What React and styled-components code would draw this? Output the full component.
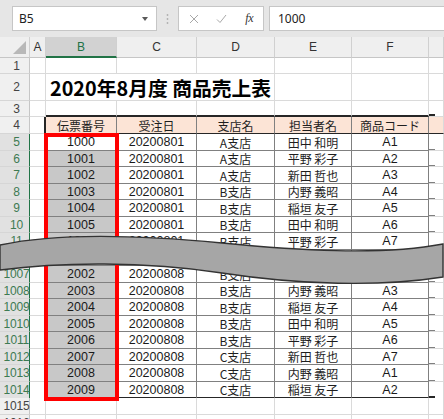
import React from 'react';
import styled, { createGlobalStyle } from 'styled-components';

const Global = createGlobalStyle`
  html, body { margin: 0; padding: 0; background: #fff; }
  body { width: 444px; height: 419px; overflow: hidden; }
  #root { width: 444px; height: 419px; }
`;

const COLS = '30px 16px 71px 80px 78px 77px 77px 1fr';
const DARK = '#262626';
const INNER = '#808080';
const GRID = '#dadada';
const GREEN = '#217346';

const Page = styled.div`
  position: relative;
  width: 444px;
  height: 419px;
  overflow: hidden;
  background: #fff;
  font-family: "Noto Sans CJK JP", "Noto Sans", sans-serif;
`;

const FormulaBar = styled.div`
  height: 37px;
  box-sizing: border-box;
  background: #e6e6e6;
  display: flex;
  align-items: center;
  padding-left: 12px;
`;

const NameBox = styled.div`
  width: 145px;
  height: 25px;
  box-sizing: border-box;
  background: #fff;
  border: 1px solid #c6c6c6;
  display: flex;
  align-items: center;
  justify-content: space-between;
  padding: 0 8px 0 6px;
  font: 12px "Noto Sans", sans-serif;
  color: #222;
`;

const Caret = styled.span`
  width: 0;
  height: 0;
  border-left: 3.5px solid transparent;
  border-right: 3.5px solid transparent;
  border-top: 4px solid #5a5a5a;
`;

const Sep = styled.div`
  width: 21px;
  display: flex;
  justify-content: center;
`;

const FuncBox = styled.div`
  width: 86px;
  height: 25px;
  box-sizing: border-box;
  background: #fff;
  border: 1px solid #c6c6c6;
  display: flex;
  align-items: center;
  padding-left: 1px;
`;

const IconSlot = styled.div`
  width: 28px;
  display: flex;
  justify-content: center;
  align-items: center;
`;

const Fx = styled.span`
  font: italic 12px "Liberation Serif", serif;
  color: #333;
  letter-spacing: -0.5px;
`;

const FormulaInput = styled.div`
  flex: 1;
  margin-left: 5px;
  margin-right: -4px;
  height: 25px;
  box-sizing: border-box;
  background: #fff;
  border: 1px solid #c6c6c6;
  display: flex;
  align-items: center;
  padding-left: 8px;
  font: 12px "Noto Sans", sans-serif;
  color: #222;
`;

const Row = styled.div`
  display: grid;
  grid-template-columns: ${COLS};
  height: ${p => p.$h}px;
`;

const ColHead = styled.div`
  box-sizing: border-box;
  background: ${p => (p.$sel ? '#d2d2d2' : '#efefef')};
  border-right: 1px solid #d0d0d0;
  border-bottom: ${p => (p.$sel ? `2px solid ${GREEN}` : '1px solid #c6c6c6')};
  color: ${p => (p.$sel ? GREEN : '#333')};
  font: 12px "Liberation Sans", sans-serif;
  display: flex;
  align-items: center;
  justify-content: center;
  position: relative;
`;

const Corner = styled(ColHead)`
  &::after {
    content: '';
    position: absolute;
    right: 3px;
    bottom: 3px;
    width: 0;
    height: 0;
    border-left: 13px solid transparent;
    border-bottom: 13px solid #b8b8b8;
  }
`;

const RowHead = styled.div`
  box-sizing: border-box;
  background: ${p => (p.$sel ? '#e1e1e1' : '#f0f0f0')};
  border-right: 1px solid ${p => (p.$sel ? GREEN : '#c6c6c6')};
  border-bottom: 1px solid #d6d6d6;
  color: ${p => (p.$sel ? '#3d7a52' : '#444')};
  font: 12px/14px "Liberation Sans", sans-serif;
  display: flex;
  align-items: center;
  justify-content: center;
  padding-left: 4px;
  letter-spacing: -0.2px;
`;

const Cell = styled.div`
  box-sizing: border-box;
  background: ${p => p.$bg || '#fff'};
  border-right: ${p => p.$rw || 1}px solid ${p => p.$rc || GRID};
  border-bottom: ${p => p.$bw || 1}px solid ${p => p.$bc || GRID};
  color: #1e1e1e;
  font-size: 12px;
  line-height: 15px;
  display: flex;
  align-items: center;
  justify-content: center;
  white-space: nowrap;
`;

const NumCell = styled(Cell)`
  font-family: "Liberation Sans", sans-serif;
  font-size: 12.5px;
  line-height: 14px;
  color: #1a1a1a;
`;

const TitleCell = styled.div`
  grid-column: 3 / span 3;
  box-sizing: border-box;
  border-right: 1px solid ${GRID};
  border-bottom: 1px solid ${GRID};
  display: flex;
  align-items: center;
  padding-left: 4px;
  padding-top: 2px;
  font-size: 19.8px;
  line-height: 24px;
  font-weight: 700;
  color: #000;
  white-space: nowrap;
`;

const TailCell = styled(Cell)`
  background: ${p => (p.$tail ? `linear-gradient(${p.$tail}, ${p.$tail}) left bottom / 6px ${p.$tw || 1}px no-repeat, #fff` : '#fff')};
`;

const RedFrame = styled.div`
  position: absolute;
  left: 44px;
  top: 133px;
  width: 75px;
  height: 268px;
  box-sizing: border-box;
  border: 4px solid #ff0000;
  pointer-events: none;
`;

const Break = styled.svg`
  position: absolute;
  left: 0;
  top: 0;
  pointer-events: none;
`;

const heads = ['伝票番号', '受注日', '支店名', '担当者名', '商品コード'];

const data = [
  ['5', '1000', '20200801', 'A支店', '田中 和明', 'A1'],
  ['6', '1001', '20200801', 'A支店', '平野 彩子', 'A2'],
  ['7', '1002', '20200801', 'A支店', '新田 哲也', 'A3'],
  ['8', '1003', '20200801', 'B支店', '内野 義昭', 'A4'],
  ['9', '1004', '20200801', 'B支店', '稲垣 友子', 'A5'],
  ['10', '1005', '20200801', 'B支店', '田中 和明', 'A6'],
  ['11', '1006', '20200801', 'B支店', '平野 彩子', 'A7'],
  ['1006', '2001', '20200808', 'B支店', '平野 彩子', 'A1'],
  ['1007', '2002', '20200808', 'B支店', '新田 哲也', 'A2'],
  ['1008', '2003', '20200808', 'B支店', '内野 義昭', 'A3'],
  ['1009', '2004', '20200808', 'B支店', '稲垣 友子', 'A4'],
  ['1010', '2005', '20200808', 'B支店', '田中 和明', 'A5'],
  ['1011', '2006', '20200808', 'B支店', '平野 彩子', 'A6'],
  ['1012', '2007', '20200808', 'C支店', '新田 哲也', 'A7'],
  ['1013', '2008', '20200808', 'C支店', '内野 義昭', 'A1'],
  ['1014', '2009', '20200808', 'C支店', '稲垣 友子', 'A2'],
];

function PlainRow({ label, h }) {
  return (
    <Row $h={h}>
      <RowHead>{label}</RowHead>
      <Cell />
      <Cell />
      <Cell />
      <Cell />
      <Cell />
      <Cell />
      <Cell />
    </Row>
  );
}

export default function App() {
  return (
    <Page>
      <Global />
      <FormulaBar>
        <NameBox>
          <span>B5</span>
          <Caret />
        </NameBox>
        <Sep>
          <svg width="3" height="12" viewBox="0 0 3 12">
            <circle cx="1.5" cy="2" r="0.9" fill="#b0b0b0" />
            <circle cx="1.5" cy="6" r="0.9" fill="#b0b0b0" />
            <circle cx="1.5" cy="10" r="0.9" fill="#b0b0b0" />
          </svg>
        </Sep>
        <FuncBox>
          <IconSlot>
            <svg width="10" height="10" viewBox="0 0 10 10">
              <path d="M1 1 L9 9 M9 1 L1 9" stroke="#a8a8a8" strokeWidth="1" fill="none" />
            </svg>
          </IconSlot>
          <IconSlot>
            <svg width="11" height="10" viewBox="0 0 11 10">
              <path d="M1 5.5 L4 8.5 L10 1" stroke="#a8a8a8" strokeWidth="1" fill="none" />
            </svg>
          </IconSlot>
          <IconSlot>
            <Fx>fx</Fx>
          </IconSlot>
        </FuncBox>
        <FormulaInput>1000</FormulaInput>
      </FormulaBar>

      <Row $h={21}>
        <Corner />
        <ColHead>A</ColHead>
        <ColHead $sel>B</ColHead>
        <ColHead>C</ColHead>
        <ColHead>D</ColHead>
        <ColHead>E</ColHead>
        <ColHead>F</ColHead>
        <ColHead />
      </Row>

      <PlainRow label="1" h={16} />

      <Row $h={27}>
        <RowHead>2</RowHead>
        <Cell />
        <TitleCell>2020年8月度 商品売上表</TitleCell>
        <Cell />
        <Cell />
        <Cell />
      </Row>

      <Row $h={16}>
        <RowHead>3</RowHead>
        <Cell />
        <Cell $bw={2} $bc={DARK} />
        <Cell $bw={2} $bc={DARK} />
        <Cell $bw={2} $bc={DARK} />
        <Cell $bw={2} $bc={DARK} />
        <Cell $bw={2} $bc={DARK} />
        <TailCell $tail={DARK} $tw={2} />
      </Row>

      <Row $h={17}>
        <RowHead>4</RowHead>
        <Cell $rw={2} $rc={DARK} />
        {heads.map(t => (
          <Cell key={t} $bg="#fce4d6" $rc={INNER} $bc={DARK}>
            {t}
          </Cell>
        ))}
        <Cell $bg="#fce4d6" $bc={DARK} />
      </Row>

      {data.map(([n, id, d, b, p, c], i) => {
        const last = i === data.length - 1;
        const bw = last ? 2 : 1;
        const bc = last ? DARK : INNER;
        return (
          <Row key={n + id} $h={i % 2 === 0 ? 17 : 16}>
            <RowHead $sel>{n}</RowHead>
            <Cell $rw={2} $rc={DARK} />
            <NumCell $bg={i === 0 ? '#fff' : '#c8c8c8'} $rc={INNER} $bw={bw} $bc={bc}>{id}</NumCell>
            <NumCell $rc={INNER} $bw={bw} $bc={bc}>{d}</NumCell>
            <Cell $rc={INNER} $bw={bw} $bc={bc}>{b}</Cell>
            <Cell $rc={INNER} $bw={bw} $bc={bc}>{p}</Cell>
            <NumCell $rc={INNER} $bw={bw} $bc={bc}>{c}</NumCell>
            <TailCell $tail={bc} $tw={bw} />
          </Row>
        );
      })}

      <PlainRow label="1015" h={17} />
      <PlainRow label="1016" h={16} />

      <RedFrame />

      <Break width="444" height="419" viewBox="0 0 444 419">
        <path
          d="M0 245 C 60 232, 150 236, 222 243 S 380 256, 443 244 L 443 277 C 380 287, 300 285, 222 273 S 60 262, 0 270 Z"
          fill="#a6a6a6"
          stroke="#333"
          strokeWidth="1.4"
        />
      </Break>
    </Page>
  );
}
